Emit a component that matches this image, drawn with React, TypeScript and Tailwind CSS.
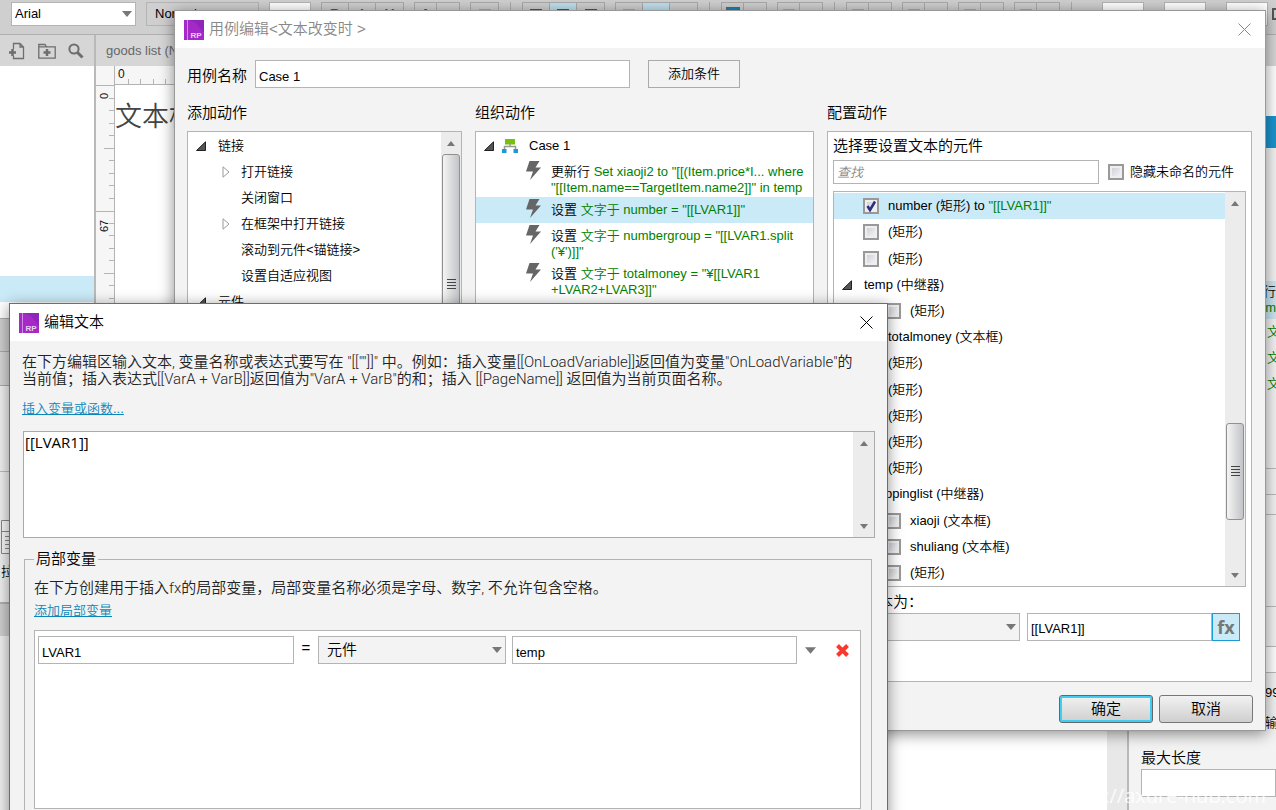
import { useId, type ReactNode } from 'react';
import clsx from 'clsx';

const FIELD = 'border border-[#b4b4b4] bg-white px-[3px] pt-1 text-[13px] text-black outline-none';
const TOOL_FIELD = 'h-6 w-[42px] shrink-0 border border-[#b4b4b4] bg-white px-1 text-[13px] text-black outline-none';

/* ---------- Icons ---------- */

function AppIcon() {
  return (
    <svg className="h-5 w-5 shrink-0" viewBox="0 0 20 20" aria-hidden="true">
      <rect width="20" height="20" fill="#a429c6" />
      <path d="M5 0H20V13L12 3Z" fill="#8f25bb" />
      <path d="M3.500 0V20" stroke="#cf8be2" />
      <text x="6.500" y="18" fontSize="8" fontWeight="bold" fontFamily="Liberation Sans" fill="#ecd0f4">RP</text>
    </svg>
  );
}

function CloseIcon() {
  return (
    <svg className="h-[13px] w-[13px]" viewBox="0 0 13 13" fill="none" stroke="currentColor" aria-hidden="true">
      <path d="M.5 .5L12.500 12.500M12.500 .5L.5 12.500" />
    </svg>
  );
}

function Caret({ up = false, className = 'h-1.5 w-2.5' }: { up?: boolean; className?: string }) {
  return (
    <svg className={clsx('shrink-0', className)} viewBox="0 0 10 6" fill="#777" aria-hidden="true">
      <path d={up ? 'M0 6L5 0L10 6Z' : 'M0 0H10L5 6Z'} />
    </svg>
  );
}

function OpenArrow() {
  return (
    <svg className="h-2.5 w-2.5 shrink-0" viewBox="0 0 10 10" aria-hidden="true">
      <path d="M.5 9.500H9.500V.8Z" fill="#555" stroke="#222" />
    </svg>
  );
}

function ClosedArrow() {
  return (
    <svg className="h-3 w-2 shrink-0" viewBox="0 0 8 12" aria-hidden="true">
      <path d="M1 .8L7 6L1 11.200Z" fill="#fff" stroke="#999" />
    </svg>
  );
}

function BoltIcon() {
  return (
    <svg className="h-5 w-4 shrink-0" viewBox="0 0 16 20" fill="#666" aria-hidden="true">
      <path d="M3.500 1H13.500L9.500 7.500H15L4 20L7 11.500H0Z" />
    </svg>
  );
}

function CaseIcon() {
  return (
    <svg className="h-4 w-4 shrink-0" viewBox="0 0 16 16" aria-hidden="true">
      <rect x="3" y="1" width="10" height="5.500" fill="#76c010" />
      <path d="M8 6V8.500M2.500 12V8.500H13.500V12" fill="none" stroke="#999" strokeWidth="1.500" />
      <rect x="0" y="11" width="4.500" height="4" fill="#1b9ad6" />
      <rect x="11.500" y="11" width="4.500" height="4" fill="#1b9ad6" />
    </svg>
  );
}

function RemoveIcon() {
  return (
    <svg className="h-[13px] w-[13px]" viewBox="0 0 13 13" stroke="#f9392b" strokeWidth="4" aria-hidden="true">
      <path d="M1.500 1.500L11.500 11.500M11.500 1.500L1.500 11.500" />
    </svg>
  );
}

/* ---------- Controls ---------- */

function ScrollBar({ thumb, className }: { thumb?: string; className?: string }) {
  return (
    <div className={clsx('flex shrink-0 flex-col justify-between bg-[#ececec]', className)}>
      <span className="flex h-[22px] shrink-0 items-center justify-center">
        <Caret up className="h-[5px] w-2" />
      </span>
      {thumb && (
        <span className={clsx('mx-px flex shrink-0 items-center justify-center rounded-[3px] border border-[#909090] bg-linear-to-r from-[#f4f4f4] via-[#dcdcde] to-[#c2c4c7]', thumb)}>
          <svg className="h-[11px] w-[9px]" viewBox="0 0 9 11" stroke="#444" aria-hidden="true">
            <path d="M0 .5H9M0 3.500H9M0 6.500H9M0 9.500H9" />
          </svg>
        </span>
      )}
      <span className="flex h-[22px] shrink-0 items-center justify-center">
        <Caret className="h-[5px] w-2" />
      </span>
    </div>
  );
}

function CheckBox({ checked = false, id }: { checked?: boolean; id?: string }) {
  return (
    <span className="relative flex h-4 w-4 shrink-0">
      <input
        id={id}
        type="checkbox"
        defaultChecked={checked}
        className="peer h-4 w-4 appearance-none border-2 border-[#999] bg-linear-to-br from-[#c6cad0] to-[#fafafa] shadow-[inset_0_0_0_2px_#eee]"
      />
      <svg className="pointer-events-none absolute inset-0 hidden h-4 w-4 peer-checked:block" viewBox="0 0 16 16" fill="none" stroke="#2c2c80" strokeWidth="2.500" aria-hidden="true">
        <path d="M4.500 8L7 12L12 3.500" />
      </svg>
    </span>
  );
}

type SelectBoxProps = { value: string; label: string; dense?: boolean; className?: string };

function SelectBox({ value, label, dense, className }: SelectBoxProps) {
  return (
    <span className={clsx('relative flex', className)}>
      <select
        aria-label={label}
        className={clsx('h-full w-full appearance-none border border-[#b4b4b4] bg-inherit outline-none', dense ? 'px-[3px]' : 'px-2')}
      >
        <option>{value}</option>
      </select>
      <span className="pointer-events-none absolute inset-y-0 right-1 flex items-center">
        <Caret />
      </span>
    </span>
  );
}

function TitleBar({ title, className }: { title: string; className?: string }) {
  return (
    <div className={clsx('flex h-[37px] items-center gap-[5px] bg-white pl-[9px] pr-3.5 text-[15px]', className)}>
      <AppIcon />
      <h2 className="flex-1">{title}</h2>
      <button aria-label="关闭"><CloseIcon /></button>
    </div>
  );
}

/* ---------- Workspace behind the dialogs ---------- */

function ToolGroup({ items, active }: { items: ReactNode[]; active?: number }) {
  return (
    <div className="flex h-6 shrink-0 border border-[#aaa]">
      {items.map((item, i) => (
        <button
          key={i}
          className={clsx(
            'flex items-center justify-center border-r border-[#aaa] text-sm font-bold text-[#555] last:border-r-0',
            items.length === 2 ? 'w-[22px]' : 'w-[27px]',
            active === i && 'bg-[#bfe0ee]',
          )}
        >
          {item}
        </button>
      ))}
    </div>
  );
}

const lines = (
  <svg className="h-3 w-3" viewBox="0 0 12 12" stroke="#555" strokeWidth="2" aria-hidden="true">
    <path d="M0 2H12M2 6H10M0 10H12" />
  </svg>
);

const dimLines = (
  <svg className="h-3 w-3" viewBox="0 0 12 12" stroke="#aaa" strokeWidth="2" aria-hidden="true">
    <path d="M0 2H12M2 6H10M0 10H12" />
  </svg>
);

const fill = <span className="h-3.5 w-3.5 border border-[#666] bg-[#1b86b4]" />;

function Divider() {
  return <span className="mx-px h-6 w-px shrink-0 bg-[#aaa]" />;
}

function Toolbar() {
  return (
    <div className="flex h-[35px] items-start gap-2.5 overflow-hidden border-b border-[#b0b0b0] bg-[#cfcfcf] pl-[11px] pt-0.5 text-[13px]">
      <SelectBox label="字体" value="Arial" dense className="h-6 w-[125px] shrink-0 bg-white" />
      <SelectBox label="字重" value="Normal" className="h-6 w-[113px] shrink-0 bg-[#cfcfcf]" />
      <input aria-label="字号" defaultValue="13" className={TOOL_FIELD} />
      <ToolGroup items={['B', 'I', 'U']} />
      <ToolGroup items={['A', '']} />
      <ToolGroup items={[dimLines]} />
      <Divider />
      <ToolGroup items={[lines, lines, lines]} active={1} />
      <ToolGroup items={[dimLines, '', '']} active={1} />
      <Divider />
      <ToolGroup items={[fill, '']} />
      <ToolGroup items={[dimLines, '']} />
      <Divider />
      <ToolGroup items={[dimLines, '']} />
      <ToolGroup items={[dimLines, '']} />
      <ToolGroup items={[dimLines, '']} />
      <ToolGroup items={[dimLines, '']} />
      <Divider />
      <div className="flex flex-1 items-center justify-end gap-5">
        <input aria-label="x" defaultValue="332" className={TOOL_FIELD} />
        <input aria-label="y" defaultValue="0" className={TOOL_FIELD} />
        <input aria-label="w" defaultValue="30" className={TOOL_FIELD} />
        <span className="-ml-4 h-3 w-1 border-2 border-r-0 border-[#555]" />
      </div>
    </div>
  );
}

function Sidebar() {
  return (
    <aside className="flex w-24 shrink-0 flex-col border-r-2 border-[#b9b9b9] bg-[#f0f0f0] text-[13px]">
      <div className="flex h-[31px] items-center gap-3 bg-[#d6d6d6] pl-2 text-[#6e6e6e]">
        <button aria-label="添加页面">
          <svg className="h-[18px] w-[18px]" viewBox="0 0 18 18" fill="none" stroke="currentColor" strokeWidth="1.300" aria-hidden="true">
            <path d="M5.500 7V1.500H12L15.500 5V16.500H5.500V14M12 1.500V5H15.500" />
            <path d="M1 10.500H8M4.500 7V14" strokeWidth="2.500" />
          </svg>
        </button>
        <button aria-label="添加文件夹">
          <svg className="h-[18px] w-[18px]" viewBox="0 0 18 18" fill="none" stroke="currentColor" strokeWidth="1.300" aria-hidden="true">
            <path d="M.8 16.200V2.500H7L8.500 4.800H17.200V16.200ZM.8 4.800H8.500" />
            <path d="M5.500 10.500H12.500M9 7V14" strokeWidth="2.500" />
          </svg>
        </button>
        <button aria-label="搜索">
          <svg className="h-4 w-4" viewBox="0 0 16 16" fill="none" stroke="currentColor" aria-hidden="true">
            <circle cx="6" cy="6" r="4.600" strokeWidth="2" />
            <path d="M9.500 9.500L14.500 14.500" strokeWidth="3" />
          </svg>
        </button>
      </div>
      <div className="h-[210px] bg-white" />
      <div className="h-[26px] bg-[#caeaf7]" />
      <div className="h-4 bg-white" />
      <div className="h-[34px] border-y border-[#aaa] bg-[#cfcfcf]" />
      <div className="h-[34px] border-b border-[#aaa] bg-[#d6d6d6]" />
      <div className="h-[86px] border-b border-[#bbb]" />
      <div className="flex h-[132px] flex-col border-b-2 border-[#b0b0b0] pt-12">
        <svg className="h-[34px] w-[34px]" viewBox="0 0 34 34" fill="#f8f8f8" stroke="#888" aria-hidden="true">
          <path d="M1.500 .5H33V33.500H1.500ZM1.500 11.500H33M5 16.500H28M5 20.500H28M5 24.500H28M5 28.500H28" />
        </svg>
        <span className="pl-px pt-2">拉</span>
      </div>
      <div className="h-8 bg-[#cfcfcf]" />
    </aside>
  );
}

function Canvas() {
  const ticks = [98, 110, 123, 135, 160, 173, 185, 198, 223, 235, 248, 260, 285, 298];
  return (
    <main className="flex min-w-0 flex-1 flex-col">
      <div className="flex h-[31px] items-center bg-[#d6d6d6] pl-2.5 text-[13px] text-[#666]">
        goods list (N
      </div>
      <div className="flex flex-1">
        <svg className="h-full w-[19px] shrink-0 bg-[#f6f6f6]" stroke="#b4b4b4" aria-hidden="true">
          <path d="M18.500 0V800M0 19.500H19M0 145.500H19M8 82.500H19M8 207.500H19" fill="none" />
          {ticks.map((y) => (
            <path key={y} d={`M13 ${y - 66}.5H18`} />
          ))}
          <g fill="#111" stroke="none" fontSize="11" fontFamily="Liberation Sans">
            <text transform="translate(12 33) rotate(-90)">0</text>
            <text transform="translate(12 166) rotate(-90)">67</text>
          </g>
        </svg>
        <div className="flex min-w-0 flex-1 flex-col border-r-[20px] border-[#e8e8e8] bg-white">
          <svg className="h-[19px] w-full bg-[#f6f6f6]" stroke="#b4b4b4" aria-hidden="true">
            <path d="M0 18.500H990M13.500 13V18M25.500 13V18M38.500 13V18M50.500 13V18" fill="none" />
            <text x="3" y="12" fill="#111" stroke="none" fontSize="12" fontFamily="Liberation Sans">0</text>
          </svg>
          <p className="pt-3 text-[27px] leading-10 text-[#444]">文本框</p>
        </div>
      </div>
    </main>
  );
}

function Inspector() {
  return (
    <aside className="flex w-[149px] shrink-0 flex-col overflow-hidden border-l-2 border-[#b9b9b9] bg-[#f3f3f3] text-[13px] leading-4">
      <div className="h-[31px] bg-[#d6d6d6]" />
      <div className="h-[50px] bg-white" />
      <div className="h-8 bg-[#1b94cd]" />
      <div className="h-[133px]" />
      <div className="h-[38px] bg-[#cbe6f1] pl-[134px] pt-[3px] text-right">
        行<br />
        <span className="text-[#008000]">m</span>
      </div>
      <div className="h-[150px] border-b border-[#bbb] pl-[138px] leading-[26px] text-[#008000]">
        文<br />文<br />文
      </div>
      <div className="h-[26px] border-b border-[#bbb]" />
      <div className="h-5 border-b border-[#bbb]" />
      <div className="h-[92px] border-b border-[#bbb]" />
      <div className="h-10 border-b border-[#bbb]" />
      <div className="h-[26px] border-b border-[#bbb] bg-white" />
      <div className="flex h-[73px] flex-col gap-3.5 pl-[136px] pt-3">
        <span>99</span>
        <span>输</span>
      </div>
      <label htmlFor="max-length" className="pl-3 text-[15px] leading-[23px]">最大长度</label>
      <input id="max-length" className={clsx(FIELD, 'ml-3 h-7 shrink-0')} />
    </aside>
  );
}

/* ---------- Case editor dialog ---------- */

function AddActions() {
  const actions = [
    { name: '打开链接', group: true },
    { name: '关闭窗口', group: false },
    { name: '在框架中打开链接', group: true },
    { name: '滚动到元件<锚链接>', group: false },
    { name: '设置自适应视图', group: false },
  ];
  return (
    <div className="flex flex-1 border border-[#b4b4b4] bg-white">
      <ul className="flex-1 pt-px text-[13px] leading-[26px]">
        <li className="flex items-center gap-3 pl-2"><OpenArrow />链接</li>
        {actions.map((a) => (
          <li key={a.name} className="flex items-center gap-[11px] pl-[34px]">
            <span className="flex w-2">{a.group && <ClosedArrow />}</span>
            {a.name}
          </li>
        ))}
        <li className="flex items-center gap-3 pl-2"><OpenArrow />元件</li>
      </ul>
      <ScrollBar className="w-5" thumb="mb-auto h-[261px]" />
    </div>
  );
}

function CaseAction({ name, selected, children }: { name: string; selected?: boolean; children: ReactNode }) {
  return (
    <li className={clsx('flex min-h-[26px] gap-[9px] pb-px pl-[50px] pt-px', selected && 'bg-[#cbeaf8]')}>
      <BoltIcon />
      <p className="whitespace-nowrap pt-1 text-[#008000]">
        <span className="text-black">{name}</span> {children}
      </p>
    </li>
  );
}

function CaseActions() {
  return (
    <div className="flex-1 border border-[#b4b4b4] bg-white text-[13px] leading-4">
      <div className="flex h-[27px] items-center pl-2">
        <OpenArrow />
        <span className="pl-2"><CaseIcon /></span>
        <span className="pl-[11px]">Case 1</span>
      </div>
      <ul>
        <CaseAction name="更新行">
          Set xiaoji2 to "[[(Item.price*I... where<br />"[[Item.name==TargetItem.name2]]" in temp
        </CaseAction>
        <CaseAction name="设置" selected>文字于 number = "[[LVAR1]]"</CaseAction>
        <CaseAction name="设置">
          文字于 numbergroup = "[[LVAR1.split<br />('¥')]]"
        </CaseAction>
        <CaseAction name="设置">
          文字于 totalmoney = "¥[[LVAR1<br />+LVAR2+LVAR3]]"
        </CaseAction>
      </ul>
    </div>
  );
}

type Widget = { name: string; level: 'group' | 'item' | 'child'; checked?: boolean };

const WIDGETS: Widget[] = [
  { name: 'number (矩形) to ', level: 'item', checked: true },
  { name: '(矩形)', level: 'item' },
  { name: '(矩形)', level: 'item' },
  { name: 'temp (中继器)', level: 'group' },
  { name: '(矩形)', level: 'child' },
  { name: 'totalmoney (文本框)', level: 'item' },
  { name: '(矩形)', level: 'item' },
  { name: '(矩形)', level: 'item' },
  { name: '(矩形)', level: 'item' },
  { name: '(矩形)', level: 'item' },
  { name: '(矩形)', level: 'item' },
  { name: 'shoppinglist (中继器)', level: 'group' },
  { name: 'xiaoji (文本框)', level: 'child' },
  { name: 'shuliang (文本框)', level: 'child' },
  { name: '(矩形)', level: 'child' },
];

function WidgetRow({ name, level, checked }: Widget) {
  const id = useId();
  if (level === 'group') {
    return (
      <li className="flex flex-1 items-center gap-3 pl-2"><OpenArrow />{name}</li>
    );
  }
  return (
    <li className={clsx('flex flex-1 items-center gap-[9px]', level === 'child' ? 'pl-[51px]' : 'pl-[29px]', checked && 'bg-[#cbeaf8]')}>
      <CheckBox id={id} checked={checked} />
      <label htmlFor={id} className="whitespace-pre">
        {name}
        {checked && <span className="text-[#008000]">"[[LVAR1]]"</span>}
      </label>
    </li>
  );
}

function ConfigureAction() {
  return (
    <div className="flex flex-1 flex-col border border-[#b4b4b4] bg-white px-[5px] pb-10 leading-5">
      <h4 className="text-[15px] leading-7">选择要设置文本的元件</h4>
      <div className="flex h-6 items-center gap-[9px] text-[13px]">
        <input
          aria-label="查找"
          placeholder="查找"
          className="h-6 w-[266px] border border-[#b4b4b4] px-[3px] italic outline-none placeholder:text-[#888]"
        />
        <label className="flex items-center gap-1.5"><CheckBox />隐藏未命名的元件</label>
      </div>
      <div className="mt-[7px] flex h-[396px] border border-[#b4b4b4]">
        <ul className="flex flex-1 flex-col pt-px text-[13px]">
          {WIDGETS.map((w, i) => <WidgetRow key={i} {...w} />)}
        </ul>
        <ScrollBar className="w-5" thumb="mt-[165px] h-[97px]" />
      </div>
      <h4 className="pt-1 text-[15px] leading-[22px]">设置文本为：</h4>
      <div className="flex h-7">
        <SelectBox label="设置文本为" value="值" className="mr-[7px] w-[187px] bg-[#f3f3f3]" />
        <input aria-label="值" defaultValue="[[LVAR1]]" className={clsx(FIELD, 'w-[185px]')} />
        <button className="w-7 border border-[#1b9ad6] bg-[#cbeaf8] font-['Open_Sans',sans-serif] text-lg font-bold leading-5 text-[#777]">fx</button>
      </div>
    </div>
  );
}

function CaseDialog() {
  return (
    <section className="absolute left-[174px] right-2.5 top-2.5 flex flex-col border border-[#999] bg-[#f3f3f3] shadow-[0_3px_14px_rgba(0,0,0,0.45)]">
      <TitleBar title="用例编辑<文本改变时 >" className="text-[#888]" />
      <div className="flex h-[52px] items-center pl-3 text-[15px]">
        <label htmlFor="case-name" className="w-[68px] pt-1">用例名称</label>
        <input id="case-name" defaultValue="Case 1" className={clsx(FIELD, 'h-7 w-[375px]')} />
        <button className="ml-[18px] h-7 w-[92px] border border-[#aaa] text-[13px]">添加条件</button>
      </div>
      <div className="flex gap-[13px] pl-3 pr-[13px] text-[15px]">
        <div className="flex w-[275px] flex-col">
          <h3 className="h-[31px] leading-[26px]">添加动作</h3>
          <AddActions />
        </div>
        <div className="flex w-[339px] flex-col">
          <h3 className="h-[31px] leading-[26px]">组织动作</h3>
          <CaseActions />
        </div>
        <div className="flex flex-1 flex-col">
          <h3 className="h-[31px] leading-[26px]">配置动作</h3>
          <ConfigureAction />
        </div>
      </div>
      <div className="flex justify-end gap-1.5 px-3 pb-[7px] pt-[13px] text-[15px]">
        <button className="h-7 w-[94px] rounded-[3px] border border-[#666] bg-linear-to-b from-[#f2f2f2] to-[#cfcfcf] shadow-[inset_0_0_0_2px_#3fcdf2]">确定</button>
        <button className="h-7 w-[94px] rounded-[3px] border border-[#777] bg-linear-to-b from-[#f2f2f2] to-[#cfcfcf]">取消</button>
      </div>
    </section>
  );
}

/* ---------- Text editor dialog ---------- */

function TextDialog() {
  return (
    <section className="absolute left-[9px] right-[388px] top-[303px] border border-[#2a7fc4] bg-[#f3f3f3] text-[15px] shadow-[0_3px_14px_rgba(0,0,0,0.45)]">
      <TitleBar title="编辑文本" className="text-black" />
      <div className="flex flex-col px-3">
        <p className="pr-3 pt-[13px] font-['Roboto','Noto_Sans_CJK_SC',sans-serif] leading-[17px] text-[#222]">
          在下方编辑区输入文本, 变量名称或表达式要写在 "[[""]]" 中。例如：插入变量[[OnLoadVariable]]返回值为变量"OnLoadVariable"的当前值；插入表达式[[VarA + VarB]]返回值为"VarA + VarB"的和；插入 [[PageName]] 返回值为当前页面名称。
        </p>
        <a href="#insert" className="pt-3 text-[13px] leading-[18px] text-[#0b86b8] underline">插入变量或函数...</a>
        <div className="ml-px mt-[13px] flex h-[107px] border border-[#aaa] bg-white">
          <textarea
            aria-label="文本"
            defaultValue="[[LVAR1]]"
            className="flex-1 resize-none px-px font-['Open_Sans',sans-serif] text-[15px] font-normal leading-5 outline-none"
          />
          <ScrollBar className="w-[21px]" />
        </div>
        <fieldset className="ml-0.5 mr-[3px] mt-2.5 border border-[#b4b4b4] pb-6 pl-[9px] pr-2.5">
          <legend className="px-0.5 leading-[22px]">局部变量</legend>
          <p className="pt-1.5 font-['Roboto','Noto_Sans_CJK_SC',sans-serif] leading-6 text-[#222]">
            在下方创建用于插入fx的局部变量，局部变量名称必须是字母、数字, 不允许包含空格。
          </p>
          <a href="#add" className="block text-[13px] leading-[22px] text-[#0b86b8] underline">添加局部变量</a>
          <div className="mt-2 flex h-[179px] items-start border border-[#b4b4b4] bg-white px-[3px] pt-[5px]">
            <input aria-label="变量名" defaultValue="LVAR1" className={clsx(FIELD, 'h-7 w-[256px]')} />
            <span className="w-6 text-center leading-6">=</span>
            <SelectBox label="来源" value="元件" className="mr-1.5 h-7 w-[188px] bg-[#f3f3f3]" />
            <input aria-label="目标元件" defaultValue="temp" className={clsx(FIELD, 'h-7 min-w-0 flex-1')} />
            <button aria-label="选择元件" className="flex h-7 w-[27px] items-center justify-center"><Caret className="h-[7px] w-[11px]" /></button>
            <button aria-label="删除" className="flex h-7 w-[33px] items-center justify-center pl-1"><RemoveIcon /></button>
          </div>
        </fieldset>
      </div>
    </section>
  );
}

export default function App() {
  return (
    <div className="relative flex h-screen flex-col overflow-hidden bg-white font-['Liberation_Sans','Noto_Sans_CJK_SC',sans-serif] font-[350] text-black">
      <Toolbar />
      <div className="flex flex-1">
        <Sidebar />
        <Canvas />
        <Inspector />
      </div>
      <CaseDialog />
      <TextDialog />
      <span className="absolute bottom-0 right-2.5 font-['Open_Sans',sans-serif] text-xl font-normal text-white/80">://axure-hub.com</span>
    </div>
  );
}
